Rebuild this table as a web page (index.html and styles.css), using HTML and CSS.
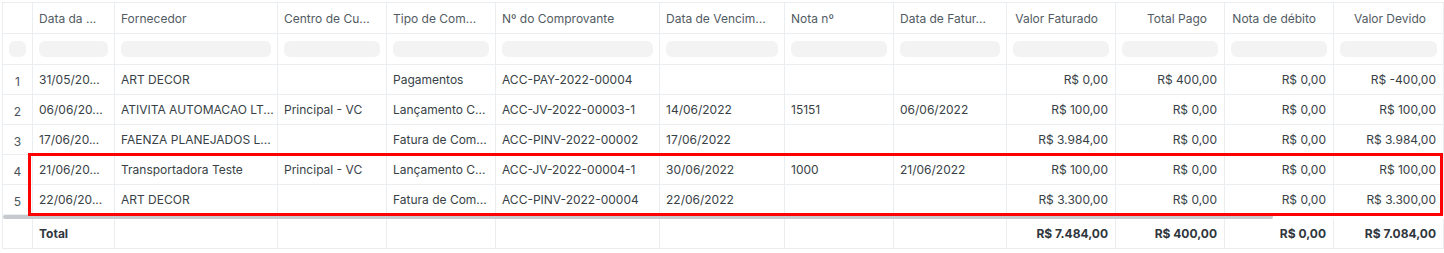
FILE: index.html
```html
<!DOCTYPE html>
<html lang="pt-BR">
<head>
<meta charset="utf-8">
<title>Relatório</title>
<link rel="stylesheet" href="styles.css">
</head>
<body>
<div class="table">
  <div class="row head">
    <div class="cell"></div>
    <div class="cell">Data da ...</div>
    <div class="cell">Fornecedor</div>
    <div class="cell">Centro de Cu...</div>
    <div class="cell">Tipo de Com...</div>
    <div class="cell">Nº do Comprovante</div>
    <div class="cell">Data de Vencim...</div>
    <div class="cell">Nota nº</div>
    <div class="cell">Data de Fatur...</div>
    <div class="cell num">Valor Faturado</div>
    <div class="cell num">Total Pago</div>
    <div class="cell num">Nota de débito</div>
    <div class="cell num">Valor Devido</div>
  </div>
  <div class="row filter">
    <div class="cell"><span class="input"></span></div>
    <div class="cell"><span class="input"></span></div>
    <div class="cell"><span class="input"></span></div>
    <div class="cell"><span class="input"></span></div>
    <div class="cell"><span class="input"></span></div>
    <div class="cell"><span class="input"></span></div>
    <div class="cell"><span class="input"></span></div>
    <div class="cell"><span class="input"></span></div>
    <div class="cell"><span class="input"></span></div>
    <div class="cell"><span class="input"></span></div>
    <div class="cell"><span class="input"></span></div>
    <div class="cell"><span class="input"></span></div>
    <div class="cell"><span class="input"></span></div>
  </div>
  <div class="row body">
    <div class="cell idx">1</div>
    <div class="cell">31/05/20...</div>
    <div class="cell">ART DECOR</div>
    <div class="cell"></div>
    <div class="cell">Pagamentos</div>
    <div class="cell">ACC-PAY-2022-00004</div>
    <div class="cell"></div>
    <div class="cell"></div>
    <div class="cell"></div>
    <div class="cell num">R$ 0,00</div>
    <div class="cell num">R$ 400,00</div>
    <div class="cell num">R$ 0,00</div>
    <div class="cell num">R$ -400,00</div>
  </div>
  <div class="row body">
    <div class="cell idx">2</div>
    <div class="cell">06/06/20...</div>
    <div class="cell">ATIVITA AUTOMACAO LT...</div>
    <div class="cell">Principal - VC</div>
    <div class="cell">Lançamento C...</div>
    <div class="cell">ACC-JV-2022-00003-1</div>
    <div class="cell">14/06/2022</div>
    <div class="cell">15151</div>
    <div class="cell">06/06/2022</div>
    <div class="cell num">R$ 100,00</div>
    <div class="cell num">R$ 0,00</div>
    <div class="cell num">R$ 0,00</div>
    <div class="cell num">R$ 100,00</div>
  </div>
  <div class="row body">
    <div class="cell idx">3</div>
    <div class="cell">17/06/20...</div>
    <div class="cell">FAENZA PLANEJADOS L...</div>
    <div class="cell"></div>
    <div class="cell">Fatura de Com...</div>
    <div class="cell">ACC-PINV-2022-00002</div>
    <div class="cell">17/06/2022</div>
    <div class="cell"></div>
    <div class="cell"></div>
    <div class="cell num">R$ 3.984,00</div>
    <div class="cell num">R$ 0,00</div>
    <div class="cell num">R$ 0,00</div>
    <div class="cell num">R$ 3.984,00</div>
  </div>
  <div class="row body">
    <div class="cell idx">4</div>
    <div class="cell">21/06/20...</div>
    <div class="cell">Transportadora Teste</div>
    <div class="cell">Principal - VC</div>
    <div class="cell">Lançamento C...</div>
    <div class="cell">ACC-JV-2022-00004-1</div>
    <div class="cell">30/06/2022</div>
    <div class="cell">1000</div>
    <div class="cell">21/06/2022</div>
    <div class="cell num">R$ 100,00</div>
    <div class="cell num">R$ 0,00</div>
    <div class="cell num">R$ 0,00</div>
    <div class="cell num">R$ 100,00</div>
  </div>
  <div class="row body">
    <div class="cell idx">5</div>
    <div class="cell">22/06/20...</div>
    <div class="cell">ART DECOR</div>
    <div class="cell"></div>
    <div class="cell">Fatura de Com...</div>
    <div class="cell">ACC-PINV-2022-00004</div>
    <div class="cell">22/06/2022</div>
    <div class="cell"></div>
    <div class="cell"></div>
    <div class="cell num">R$ 3.300,00</div>
    <div class="cell num">R$ 0,00</div>
    <div class="cell num">R$ 0,00</div>
    <div class="cell num">R$ 3.300,00</div>
  </div>
  <div class="scrollbar"><span class="thumb"></span></div>
  <div class="row total">
    <div class="cell"></div>
    <div class="cell">Total</div>
    <div class="cell"></div>
    <div class="cell"></div>
    <div class="cell"></div>
    <div class="cell"></div>
    <div class="cell"></div>
    <div class="cell"></div>
    <div class="cell"></div>
    <div class="cell num">R$ 7.484,00</div>
    <div class="cell num">R$ 400,00</div>
    <div class="cell num">R$ 0,00</div>
    <div class="cell num">R$ 7.084,00</div>
  </div>
  <div class="highlight"></div>
</div>
</body>
</html>
```

FILE: styles.css
```css
* { box-sizing: border-box; }
html, body { margin: 0; padding: 0; background: #fff; }
body {
  padding: 2px 0 0 2px;
  font-family: Inter, "Noto Sans", sans-serif;
  font-size: 12px;
  color: #383f46;
}
.table {
  position: relative;
  width: 1442px;
  border-top: 1px solid #ebeef0;
  border-left: 1px solid #ebeef0;
}
.row {
  display: grid;
  grid-template-columns: 30px 82px 163px 109px 109px 164px 125px 109px 113px 109px 109px 109px 110px;
  border-bottom: 1px solid #ebeef0;
}
.cell {
  border-right: 1px solid #ebeef0;
  padding: 0 7px 0 6px;
  display: flex;
  align-items: center;
  white-space: nowrap;
  overflow: hidden;
}
.cell.num { justify-content: flex-end; }
.head { height: 31px; color: #525b63; }
.head .cell.num { padding-right: 17px; }
.filter { height: 31px; }
.filter .cell { padding: 0 6px; }
.input {
  display: block;
  width: 100%;
  height: 16px;
  background: #f3f3f4;
  border-radius: 6px;
}
.body { height: 30px; }
.idx { justify-content: center; padding: 4px 0 0; color: #4b545c; }
.scrollbar { height: 4px; }
.thumb {
  display: block;
  width: 1270px;
  height: 4px;
  background: #c6c9cd;
  border-radius: 2px;
}
.total { height: 30px; font-weight: 700; color: #2f363d; }
.highlight {
  position: absolute;
  left: 25px;
  top: 150px;
  width: 1415px;
  height: 63px;
  border: 3px solid #ff0000;
}
```
